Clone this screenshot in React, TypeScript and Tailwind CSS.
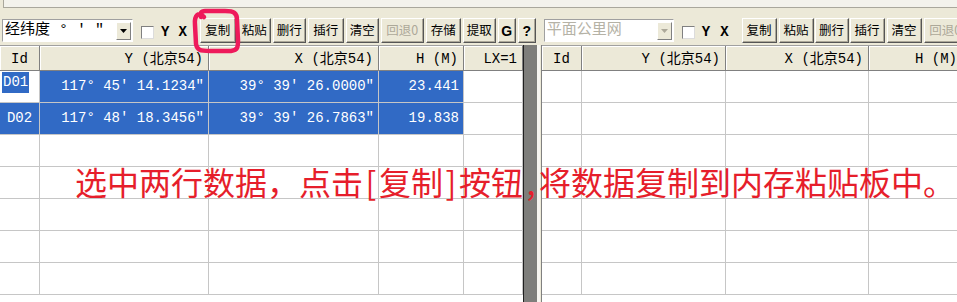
import React from 'react';

const MONO = "font-['Liberation_Mono','DejaVu_Sans_Mono','Noto_Sans_CJK_SC',monospace]";
const CJK = "font-['Noto_Sans_CJK_SC','Liberation_Sans',sans-serif]";

interface BtnProps {
  label: string;
  className?: string;
  disabled?: boolean;
  bold?: boolean;
}

const Btn = ({ label, className = '', disabled, bold }: BtnProps) => (
  <div
    className={`h-[25px] shrink-0 flex items-center justify-center bg-[#ece9d8] border border-t-white border-l-white border-r-[#555] border-b-[#555] shadow-[inset_-1px_-1px_0_#aca899] leading-none ${
      bold ? "font-['Liberation_Sans',sans-serif] font-bold text-[14px]" : `${CJK} text-[12.5px]`
    } ${disabled ? 'text-[#aca899]' : 'text-black'} ${className}`}
  >
    {label}
  </div>
);

const Combo = ({ text, disabled, className = '' }: { text: string; disabled?: boolean; className?: string }) => (
  <div className={`h-[23px] shrink-0 flex items-center bg-white border border-t-[#a0a0a0] border-l-[#a0a0a0] border-r-white border-b-white ${className}`}>
    <span className={`flex-1 pl-[2px] text-[15px] leading-none whitespace-pre ${MONO} ${disabled ? 'text-[#b5b2a6]' : 'text-black'}`}>
      {text}
    </span>
    <div className="w-[15px] h-[18px] mr-[1px] flex items-center justify-center bg-[#ece9d8] border border-t-white border-l-white border-r-[#808080] border-b-[#808080]">
      <svg width="7" height="4" viewBox="0 0 7 4">
        <path d="M0 0h7L3.5 4z" fill={disabled ? '#aca899' : '#000'} />
      </svg>
    </div>
  </div>
);

const Check = ({ className = '' }: { className?: string }) => (
  <div className={`w-[13px] h-[13px] mt-[4px] shrink-0 bg-white border border-t-[#808080] border-l-[#808080] border-r-[#dcdcdc] border-b-[#dcdcdc] ${className}`} />
);

const YX = ({ c, className = '' }: { c: string; className?: string }) => (
  <span className={`shrink-0 text-[14px] leading-none font-bold text-black font-['Liberation_Mono',monospace] ${className}`}>{c}</span>
);

interface Col {
  title: string;
  w: string;
  align: 'center' | 'right';
}

interface Cell {
  text: string;
  selected?: boolean;
  editing?: boolean;
}

const Grid = ({ cols, rows, className = '' }: { cols: Col[]; rows: Cell[][]; className?: string }) => (
  <div className={`flex flex-col bg-white overflow-hidden ${className}`}>
    <div className="flex h-[26px] shrink-0 border-t border-[#a0a0a0]">
      {cols.map((c) => (
        <div
          key={c.title}
          className={`${c.w} shrink-0 h-full flex items-center pt-[2px] bg-[#ece9d8] border-r border-b border-[#808080] shadow-[inset_1px_1px_0_#fff] text-[14px] text-black whitespace-pre ${MONO} ${
            c.align === 'center' ? 'justify-center' : 'justify-end pr-[5px]'
          }`}
        >
          {c.title}
        </div>
      ))}
    </div>
    {rows.map((r, i) => (
      <div key={i} className="flex h-[32px] shrink-0">
        {cols.map((c, j) => {
          const cell = r[j] || { text: '' };
          return (
            <div
              key={j}
              className={`${c.w} shrink-0 h-full flex items-center border-r border-b border-[#c6c6c6] text-[14px] whitespace-pre ${MONO} ${
                cell.selected ? 'bg-[#316ac5] text-white' : 'bg-white text-black'
              } ${cell.editing ? 'items-start justify-start pl-[2px] pt-[1px]' : c.align === 'center' ? 'justify-center' : 'justify-end pr-[4px]'}`}
            >
              {cell.editing ? (
                <span className="h-[21px] px-[1px] flex items-center bg-[#316ac5] text-white">{cell.text}</span>
              ) : (
                cell.text
              )}
            </div>
          );
        })}
      </div>
    ))}
  </div>
);

const leftCols: Col[] = [
  { title: 'Id', w: 'w-[40px]', align: 'center' },
  { title: 'Y (北京54)', w: 'w-[169px]', align: 'right' },
  { title: 'X (北京54)', w: 'w-[170px]', align: 'right' },
  { title: 'H (M)', w: 'w-[85px]', align: 'right' },
  { title: 'LX=1', w: 'w-[59px]', align: 'right' },
];

const rightCols: Col[] = [
  { title: 'Id', w: 'w-[40px]', align: 'center' },
  { title: 'Y (北京54)', w: 'w-[144px]', align: 'right' },
  { title: 'X (北京54)', w: 'w-[143px]', align: 'right' },
  { title: 'H (M)', w: 'w-[94px]', align: 'right' },
];

const empty: Cell[][] = Array.from({ length: 7 }, () => []);

const leftRows: Cell[][] = [
  [
    { text: 'D01', editing: true },
    { text: '117° 45′ 14.1234″', selected: true },
    { text: '39° 39′ 26.0000″', selected: true },
    { text: '23.441', selected: true },
    { text: '' },
  ],
  [
    { text: 'D02', selected: true },
    { text: '117° 48′ 18.3456″', selected: true },
    { text: '39° 39′ 26.7863″', selected: true },
    { text: '19.838', selected: true },
    { text: '' },
  ],
  ...Array.from({ length: 5 }, () => [] as Cell[]),
];

// half-width punctuation in the note takes half an em, as in the original bitmap font
const Half = ({ c }: { c: string }) => <span className="inline-block w-[16px] text-center">{c}</span>;

export default function App() {
  return (
    <div className="relative w-[957px] h-[302px] overflow-hidden bg-[#ece9d8] select-none">
      <div className="ml-[3px] h-[8px] bg-[#f3f2ec] border-l border-b border-[#a9a79c]" />

      <div className="mt-[9px] h-[27px] flex items-center">
        <Combo text="经纬度 ° ′ ″" className="ml-[2px] w-[131px]" />
        <Check className="ml-[8px]" />
        <YX c="Y" className="ml-[7px] mt-[2px]" />
        <YX c="X" className="ml-[9px] mt-[2px]" />
        <Btn label="复制" className="ml-[13px] w-[36px]" />
        <Btn label="粘贴" className="ml-[2px] w-[33px]" />
        <Btn label="删行" className="ml-[2px] w-[33px]" />
        <Btn label="插行" className="ml-[2px] w-[36px]" />
        <Btn label="清空" className="ml-[2px] w-[33px]" />
        <Btn label="回退0" disabled className="ml-[2px] w-[43px]" />
        <Btn label="存储" className="ml-[2px] w-[35px]" />
        <Btn label="提取" className="ml-[2px] w-[33px]" />
        <Btn label="G" bold className="ml-[2px] w-[18px]" />
        <Btn label="?" bold className="ml-[2px] w-[18px]" />

        <Combo text="平面公里网" disabled className="ml-[8px] w-[130px]" />
        <Check className="ml-[8px]" />
        <YX c="Y" className="ml-[7px] mt-[2px]" />
        <YX c="X" className="ml-[10px] mt-[2px]" />
        <Btn label="复制" className="ml-[13px] w-[35px]" />
        <Btn label="粘贴" className="ml-[2px] w-[35px]" />
        <Btn label="删行" className="ml-[1px] w-[34px]" />
        <Btn label="插行" className="ml-[1px] w-[35px]" />
        <Btn label="清空" className="ml-[2px] w-[35px]" />
        <Btn label="回退0" disabled className="ml-[2px] w-[43px]" />
      </div>

      <div className="mt-[1px] flex h-[257px]">
        <Grid cols={leftCols} rows={leftRows} className="w-[523px] shrink-0" />
        <div className="w-[18px] shrink-0 flex">
          <div className="w-[1px] bg-[#202020]" />
          <div className="w-[13px] bg-[#7e7e7b]" />
          <div className="w-[3px] bg-[#f6f5f0]" />
          <div className="w-[1px] bg-[#ece9d8]" />
        </div>
        <Grid cols={rightCols} rows={empty} className="flex-1 border-l border-[#808080]" />
      </div>

      {/* red marker round the copy button */}
      <svg className="absolute left-0 top-0 pointer-events-none" width="260" height="60" viewBox="0 0 260 60">
        <path
          d="M204 17 C199 11 194 15 195 25 L196 44 C197 50 200 51 210 51 L231 51 C238 50 238 47 238 40 L237 20 C237 13 234 11 225 11 L205 11 C201 11 200 13 201 17"
          fill="none"
          stroke="#ee1a5b"
          strokeWidth="4.5"
          strokeLinecap="round"
          strokeLinejoin="round"
        />
      </svg>

      <div className={`absolute left-[75px] top-[164px] text-[32px] leading-[34px] whitespace-pre text-[#e61e2b] ${CJK}`}>
        选中两行数据，点击<Half c="[" />复制<Half c="]" />按钮<Half c="," />将数据复制到内存粘贴板中。
      </div>
    </div>
  );
}
